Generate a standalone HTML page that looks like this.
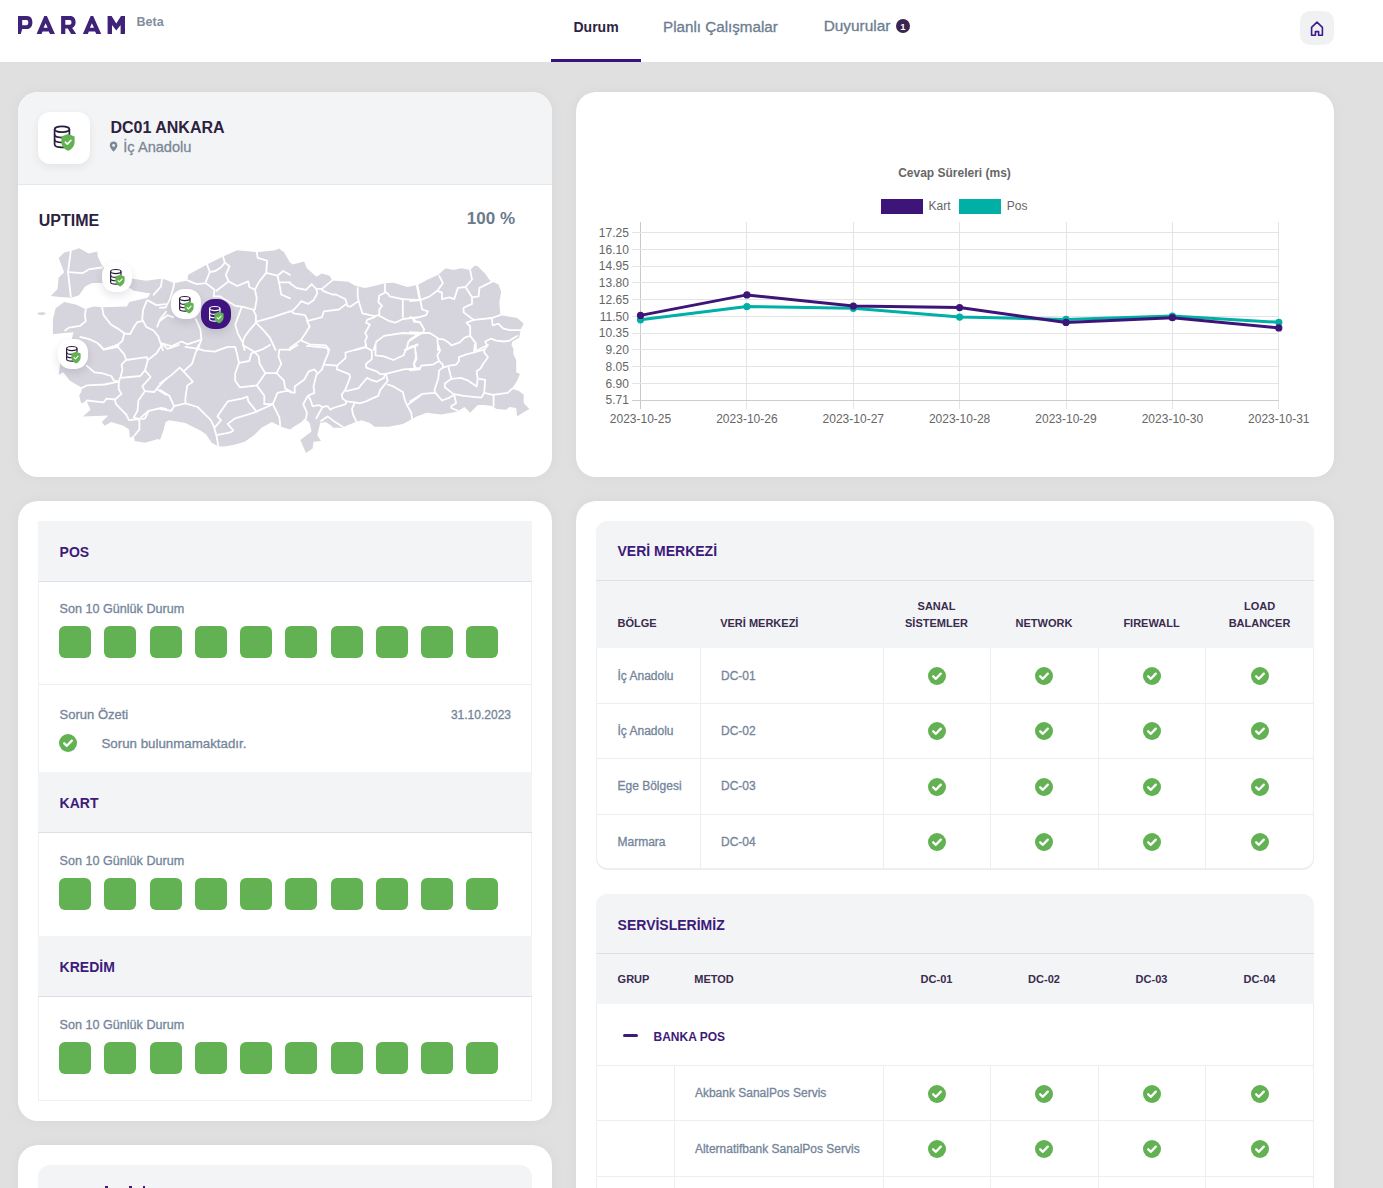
<!DOCTYPE html><html><head><meta charset="utf-8"><style>
html,body{margin:0;padding:0;}
body{width:1383px;height:1188px;overflow:hidden;position:relative;background:#e0e0e0;font-family:"Liberation Sans",sans-serif;}
.t{position:absolute;line-height:1;white-space:nowrap;}
.m{-webkit-text-stroke:0.3px currentColor;}
.r{position:absolute;}
.card{position:absolute;background:#fff;border-radius:20px;box-shadow:0 0 14px rgba(0,0,0,0.045);overflow:hidden;}
</style></head><body>
<div class="r" style="left:0px;top:0px;width:1383px;height:62px;background:#fff;"></div>
<svg class="r" style="left:0;top:0" width="140" height="40" viewBox="0 0 140 40"><g fill="#3f2378" fill-rule="evenodd">
<path d="M18 16 H27 C30.8 16 32.4 18.8 32.4 22.4 C32.4 26.2 30.3 29 26.8 29 H22.2 L20.8 34 H18 Z M22.2 19.9 H26.6 C27.8 19.9 28.3 21 28.3 22.5 C28.3 24.1 27.7 25.2 26.6 25.2 H22.2 Z"/>
<path d="M36.6 34 L44.3 16 H46.9 L54.9 34 H50 L48.8 31.4 H42.6 L41.5 34 Z M43.6 27.8 H47.7 L45.6 23.2 Z"/>
<path d="M61.1 16 H70 C73.8 16 75.6 18.7 75.6 22.2 C75.6 24.9 74.4 27 72.2 28 L76.2 34 H71.2 L67.8 28.6 H65.3 V34 H61.1 Z M65.3 19.9 H69.7 C70.9 19.9 71.5 20.9 71.5 22.3 C71.5 23.8 70.9 24.8 69.7 24.8 H65.3 Z"/>
<path d="M82.9 34 L90.6 16 H93.2 L101.2 34 H96.3 L95.1 31.4 H88.9 L87.8 34 Z M89.9 27.8 H94 L91.9 23.2 Z"/>
<path d="M107.6 34 V16 H111.6 L116.3 23.6 L121 16 H125 V34 H120.6 V25 L116.3 30.4 L112 25 V34 Z"/>
</g></svg>
<div class="t " style="left:136.6px;top:16.0px;font-size:12.5px;font-weight:700;color:#7f8d9d;">Beta</div>
<div class="t " style="left:573.5px;top:19.6px;font-size:14px;font-weight:700;color:#2e2342;">Durum</div>
<div class="t m" style="left:663.0px;top:18.6px;font-size:15.2px;font-weight:400;color:#6b7d90;">Planlı Çalışmalar</div>
<div class="t m" style="left:823.7px;top:18.4px;font-size:15.4px;font-weight:400;color:#6b7d90;">Duyurular</div>
<div class="r" style="left:896px;top:19px;width:14px;height:14px;border-radius:7px;background:#3a2450;"></div>
<div class="t " style="left:603.0px;width:600px;text-align:center;top:22.0px;font-size:9.5px;font-weight:700;color:#fff;">1</div>
<div class="r" style="left:551px;top:59px;width:90px;height:3px;background:#3b127a;"></div>
<div class="r" style="left:1300px;top:11px;width:34px;height:34px;border-radius:10px;background:#f0f1f3;"></div>
<svg class="r" style="left:1300px;top:11px" width="34" height="34" viewBox="0 0 34 34"><path d="M11.6 24.2 V16.4 L17 11.2 L22.4 16.4 V24.2 H18.6 V20.6 H15.4 V24.2 Z" fill="none" stroke="#3f1a8a" stroke-width="1.6" stroke-linejoin="round"/></svg>
<div class="card" style="left:18px;top:92px;width:534px;height:385px;">
<div class="r" style="left:0;top:0;width:534px;height:92px;background:#f3f4f6;border-bottom:1px solid #e4e6eb;"></div>
</div>
<div class="r" style="left:38px;top:112px;width:52px;height:52px;border-radius:12px;background:#fff;box-shadow:0 3px 8px rgba(0,0,0,0.07);"></div>
<svg class="r" style="left:48px;top:120px" width="32.0" height="36.0" viewBox="0 0 32 36"><g fill="none" stroke="#2a1d3d" stroke-width="1.7"><ellipse cx="14" cy="9.3" rx="7.4" ry="2.9"/><path d="M6.6 9.3 V24.3 C6.6 26.5 10 27.4 14 27.4 C15.5 27.4 16.5 27.3 17.5 27.1"/><path d="M21.4 9.3 V15"/><path d="M6.6 14.6 C6.6 16.6 10 17.6 14 17.6 C15.5 17.6 16.6 17.5 17.6 17.3"/><path d="M6.6 19.6 C6.6 21.6 10 22.5 14 22.5 C14.6 22.5 15.3 22.5 15.8 22.4"/></g><path d="M20 14.1 L26.6 16.6 V22.2 C26.6 26 23.6 29.3 20.2 30.8 C16.6 29.3 13.4 26 13.4 22.2 V16.6 Z" fill="#62b152"/><path d="M17.3 22.2 L19.3 24.1 L23 20.3" fill="none" stroke="#fff" stroke-width="1.6" stroke-linecap="round" stroke-linejoin="round"/></svg>
<div class="t " style="left:110.5px;top:119.6px;font-size:16px;font-weight:700;color:#2d2140;">DC01 ANKARA</div>
<svg class="r" style="left:109px;top:141px" width="10" height="12" viewBox="0 0 10 12"><path d="M4.6 0.6 C2.3 0.6 0.8 2.3 0.8 4.4 C0.8 6.9 4.6 10.6 4.6 10.6 C4.6 10.6 8.4 6.9 8.4 4.4 C8.4 2.3 6.9 0.6 4.6 0.6 Z M4.6 3 A1.4 1.4 0 1 1 4.6 5.8 A1.4 1.4 0 1 1 4.6 3 Z" fill="#7b8898" fill-rule="evenodd"/></svg>
<div class="t m" style="left:123.3px;top:139.6px;font-size:14.6px;font-weight:400;color:#7b8898;">İç Anadolu</div>
<div class="t " style="left:38.8px;top:212.5px;font-size:16px;font-weight:700;color:#2d2140;">UPTIME</div>
<div class="t " style="right:868.0px;top:209.5px;font-size:17px;font-weight:700;color:#6b7a8c;">100 %</div>
<svg class="r" style="left:0;top:0" width="560" height="480" viewBox="0 0 560 480">
<polygon points="58.6,258.1 64.2,252.5 70.8,251.0 79.2,248.2 88.6,253.4 97.1,251.5 98.0,257.2 102.7,266.6 108.0,270.0 118.0,274.0 126.0,277.0 132.8,278.8 146.0,280.7 161.0,278.8 166.0,279.7 174.1,283.2 187.3,280.4 188.2,274.8 207.0,264.4 223.0,256.4 237.1,250.3 256.8,252.2 275.6,250.3 278.9,248.5 284.0,252.2 290.0,262.6 292.8,264.4 304.1,261.6 306.9,268.2 316.3,276.7 322.0,273.4 329.5,275.7 332.3,280.4 348.3,281.8 355.8,286.0 365.2,288.0 378.3,285.1 385.0,283.2 393.4,282.8 407.5,287.0 417.5,285.1 427.9,279.5 438.2,274.8 445.7,268.2 453.2,270.1 460.8,268.2 470.2,270.1 474.8,265.4 477.7,266.3 485.2,273.8 489.9,280.4 498.3,284.2 501.2,291.7 499.3,302.0 500.2,312.4 500.2,315.2 517.1,318.0 523.7,323.6 520.9,329.3 519.0,337.7 512.4,341.5 511.5,345.0 513.4,348.8 513.4,354.4 516.2,360.0 516.2,372.3 520.0,374.1 517.1,380.7 513.4,386.4 509.6,391.1 513.4,389.2 519.0,391.1 523.7,394.8 523.7,403.3 529.4,408.9 522.8,412.7 517.1,416.4 516.2,408.0 509.6,407.0 505.9,409.8 496.5,408.9 491.8,406.1 484.2,405.1 477.7,405.1 470.2,412.7 464.5,407.0 457.0,411.7 441.0,414.5 426.9,412.7 416.6,416.4 411.9,419.2 410.0,420.2 402.8,423.9 388.7,426.8 374.6,426.8 369.9,423.0 361.4,420.2 355.8,422.1 346.4,425.8 341.7,427.7 333.2,427.7 330.4,424.9 325.7,422.1 320.1,423.0 317.3,435.2 321.0,440.9 313.5,441.8 312.6,448.4 306.0,453.1 300.3,439.9 311.6,431.5 309.7,423.0 305.0,418.3 301.3,422.1 293.8,426.8 290.0,429.6 281.2,426.8 271.8,422.1 261.5,427.7 254.0,435.2 244.6,441.8 235.2,444.6 224.8,446.5 218.3,446.5 211.7,442.7 206.0,434.3 200.4,430.5 185.4,423.0 169.4,420.2 165.6,422.1 163.8,429.6 160.0,439.9 158.2,439.0 145.0,442.7 134.7,440.9 133.7,435.2 130.0,438.0 129.0,429.6 123.4,425.8 111.2,422.1 104.6,425.8 101.8,422.1 108.4,415.5 83.0,416.4 90.5,409.8 86.8,401.4 81.1,403.3 79.2,395.8 82.0,390.1 81.1,387.3 69.8,380.7 63.3,372.3 58.6,375.1 60.0,365.0 60.0,345.0 71.7,339.0 73.6,332.3 61.4,333.3 52.9,334.2 52.9,319.2 54.8,311.7 55.6,308.2 64.3,302.1 76.4,304.7 85.1,309.0 93.8,306.4 102.5,307.3 126.8,306.4 129.4,302.1 147.6,297.8 150.5,293.6 133.7,290.8 130.2,288.2 118.0,287.0 100.7,283.0 92.0,283.0 85.1,286.5 79.0,295.2 71.2,297.8 60.0,297.0 50.8,296.0 57.6,289.0 58.6,277.8 64.2,272.2" fill="#d6d4dc"/>
<ellipse cx="41.6" cy="313.6" rx="4" ry="1.4" fill="#d6d4dc"/>
<g fill="none" stroke="#fff" stroke-width="1.8" stroke-linejoin="round" stroke-linecap="round">
<polyline points="70.8,251.0 68.0,272.2 70.8,296.6"/>
<polyline points="68.0,272.2 83.0,273.1 88.6,269.4 101.8,267.5"/>
<polyline points="101.8,306.0 103.7,315.4 111.2,324.8 117.8,328.6 124.3,333.3 130.0,334.2 134.7,325.8 137.5,322.0 142.2,321.1"/>
<polyline points="85.8,308.8 84.9,315.4 85.8,321.1 80.2,325.8 68.9,327.6 65.1,330.5"/>
<polyline points="124.3,333.3 122.5,340.8 116.8,345.5 111.2,348.3"/>
<polyline points="80.2,337.0 88.6,338.9 97.1,342.7 103.7,349.3 113.0,346.4 118.7,345.5"/>
<polyline points="146.9,300.4 143.1,309.8 142.2,319.2 146.0,326.7 153.5,330.5 158.2,336.1 162.9,350.2"/>
<polyline points="147.8,300.4 156.3,305.1 166.0,304.2"/>
<polyline points="166.0,311.7 160.1,319.2 157.2,326.7"/>
<polyline points="153.5,294.8 161.0,286.3 161.9,279.7"/>
<polyline points="174.1,283.2 173.2,288.9 169.4,300.2 165.6,307.7 160.0,307.7"/>
<polyline points="187.3,280.4 196.7,284.2 206.0,283.2 214.5,289.8 213.6,296.4 220.2,296.4 235.2,305.8 241.8,306.7 253.0,309.5 255.9,315.2 255.9,321.8 272.8,317.1 290.0,311.4"/>
<polyline points="207.0,264.4 209.8,272.0 206.0,281.4"/>
<polyline points="223.0,256.4 224.8,262.6 221.1,267.3 215.5,271.0 209.8,272.0"/>
<polyline points="224.8,262.6 229.5,266.3 225.8,274.8 228.6,281.4 216.4,290.8"/>
<polyline points="228.6,281.4 237.1,286.0 248.3,281.4 249.3,287.0 254.9,289.8 256.8,298.3 254.9,309.5"/>
<polyline points="256.8,252.2 257.7,257.9 267.1,260.7 266.2,272.9 258.7,282.3 254.9,289.8"/>
<polyline points="266.2,272.9 277.5,275.7 283.1,271.0 290.0,274.8"/>
<polyline points="277.5,275.7 279.4,284.2 281.2,294.5 290.0,298.3"/>
<polyline points="279.4,282.3 290.0,282.3"/>
<polyline points="241.8,306.7 238.0,317.1 235.2,324.6 238.0,334.0 242.7,342.4 244.6,350.0"/>
<polyline points="255.9,322.7 250.2,329.3 244.6,336.8 242.7,342.4"/>
<polyline points="255.9,322.7 263.4,330.2 270.0,337.8 275.6,350.0"/>
<polyline points="195.7,319.0 200.4,329.3 201.4,339.6 197.6,350.0"/>
<polyline points="160.0,320.8 167.5,315.2 173.2,317.1"/>
<polyline points="161.9,343.4 171.3,346.2 181.6,341.5 187.3,344.3 201.4,339.6"/>
<polyline points="290.0,283.2 296.6,288.0 306.0,289.8 311.6,284.2 316.3,288.9 322.0,288.9 332.3,280.4"/>
<polyline points="316.3,288.9 317.3,293.6 313.5,300.2 307.9,303.9 301.3,301.1 297.5,305.8 291.9,311.4 290.0,311.4"/>
<polyline points="322.0,288.9 322.9,290.8 332.3,294.5 336.0,294.5 345.5,299.2 347.3,305.8 350.2,306.7 358.6,301.1 357.7,296.4 357.7,287.9"/>
<polyline points="346.4,303.9 338.9,309.5 323.8,311.4 322.0,317.1 307.9,320.8 305.0,315.2 293.8,313.3 291.9,311.4"/>
<polyline points="358.6,301.1 362.4,313.3 374.6,316.1 378.3,315.2 388.7,320.8 395.3,322.7 402.8,319.0 420.0,317.1"/>
<polyline points="385.0,283.2 385.0,292.6 379.3,295.5 378.3,302.0 382.1,305.8 379.3,309.5 379.3,315.2"/>
<polyline points="385.0,291.7 388.7,294.5 389.6,296.4 399.0,298.3 402.8,299.2 420.0,300.2"/>
<polyline points="402.8,299.2 402.8,317.1"/>
<polyline points="416.9,286.0 419.7,300.2"/>
<polyline points="413.1,319.0 414.0,321.8 420.0,321.8"/>
<polyline points="306.9,320.8 309.7,326.5 305.0,334.0 301.3,339.6 290.0,348.0"/>
<polyline points="301.3,340.6 309.7,344.3 325.7,345.3 329.5,350.0"/>
<polyline points="374.6,317.1 367.1,319.9 366.1,322.7 369.9,324.6 365.2,333.0 367.1,336.8 365.2,340.6 366.1,347.1 355.8,350.0"/>
<polyline points="373.6,350.0 376.5,341.5 384.0,335.9 402.8,333.0 420.0,334.0"/>
<polyline points="420.0,334.0 408.4,341.5 406.5,350.0"/>
<polyline points="416.9,345.3 404.7,350.0"/>
<polyline points="417.5,285.1 420.3,300.2 410.0,301.1"/>
<polyline points="420.3,300.2 429.7,296.4 437.3,290.8 442.9,283.2 439.1,275.7"/>
<polyline points="437.3,290.8 442.0,292.6 442.0,299.2 449.5,297.3 454.2,299.2 457.9,287.9 465.5,287.0 472.0,279.5 470.2,270.1"/>
<polyline points="465.5,287.0 472.0,297.3 472.0,303.9 463.6,307.7 463.6,312.4 471.1,318.0 473.9,319.9 491.8,318.0 500.2,315.2"/>
<polyline points="494.6,280.4 479.5,287.9 478.6,296.4 472.0,297.3"/>
<polyline points="420.3,300.2 422.2,309.5 427.9,311.4 426.0,315.2 419.4,317.1 413.8,318.0 410.0,317.1"/>
<polyline points="413.8,318.0 414.7,320.8 420.3,322.7 424.1,329.3 423.2,333.0 410.0,332.1"/>
<polyline points="423.2,333.0 429.7,333.0 437.3,337.7 438.2,350.0"/>
<polyline points="473.9,319.9 466.4,322.7 470.2,326.5 470.2,335.9 464.5,337.7 459.8,342.4 451.4,345.3 448.5,342.4 443.8,339.6 438.2,338.7"/>
<polyline points="470.2,335.9 475.8,343.4 475.8,350.0"/>
<polyline points="491.8,318.0 492.7,325.5 498.3,323.6 503.0,328.4 509.6,330.2 520.9,330.2"/>
<polyline points="517.1,335.9 509.6,340.6 504.0,341.5 496.5,340.6 490.8,338.7 485.2,341.5 487.1,345.3 477.7,350.0"/>
<polyline points="410.0,339.6 415.6,335.9 423.2,333.0"/>
<polyline points="410.0,348.0 417.5,344.3"/>
<polyline points="86.8,365.7 94.3,372.3 101.8,373.2 111.2,376.0 114.0,380.7 118.7,381.7"/>
<polyline points="118.7,381.7 104.6,384.5 86.8,385.4 81.1,388.2"/>
<polyline points="118.7,381.7 120.6,377.0 122.5,369.4 121.5,364.7 126.2,360.0 124.3,354.4 117.8,346.9 115.9,345.0"/>
<polyline points="117.8,346.9 103.7,349.7 99.9,345.0"/>
<polyline points="126.2,360.0 139.4,358.2 146.9,357.2 147.8,360.0 145.0,370.4 140.3,376.0 130.0,377.0 120.6,377.9"/>
<polyline points="147.8,360.0 156.3,353.5 162.0,345.0"/>
<polyline points="145.0,370.4 150.7,377.0 142.2,386.4 145.0,391.1 154.4,392.0 157.2,388.2 166.0,378.8"/>
<polyline points="157.2,389.2 166.0,394.8"/>
<polyline points="118.7,381.7 118.7,389.2 121.5,393.9 115.0,399.5 115.9,404.2 126.2,414.5 129.0,420.2 139.4,419.2"/>
<polyline points="145.0,391.1 138.4,400.5 137.5,410.8 133.7,417.4 139.4,419.2 142.2,416.4 148.8,410.8 161.0,408.0 166.0,409.0"/>
<polyline points="139.4,419.2 139.4,429.6 134.7,435.2"/>
<polyline points="148.8,410.8 145.0,418.3 142.2,419.2"/>
<polyline points="115.0,399.5 106.5,398.6 103.7,402.3 86.8,400.5 83.0,405.1"/>
<polyline points="160.0,383.5 171.3,375.1 179.7,367.6 183.5,371.3 192.0,363.8 195.7,352.5 198.5,345.0"/>
<polyline points="183.5,371.3 192.9,381.7 187.3,385.4 185.4,397.6 185.4,403.3 174.1,406.1 169.4,395.8 160.0,390.1"/>
<polyline points="174.1,406.1 171.3,410.8 160.0,408.9"/>
<polyline points="185.4,403.3 197.6,407.0 210.8,420.2 213.6,425.8 216.4,435.2 218.3,446.5"/>
<polyline points="214.5,427.7 221.1,420.2 217.3,416.4 227.7,401.4 241.8,398.6 247.4,396.7 248.3,401.4 256.8,411.7"/>
<polyline points="216.4,435.2 230.5,432.4 233.3,430.5 227.7,423.9 235.2,418.3 254.0,412.6 272.8,404.2"/>
<polyline points="272.8,404.2 277.5,392.9 285.0,391.1 290.0,391.1"/>
<polyline points="272.8,404.2 279.4,417.4 280.3,425.8"/>
<polyline points="161.9,343.4 167.5,348.8 178.8,345.0"/>
<polyline points="185.4,346.9 198.5,348.8 204.2,350.6 214.5,351.6 227.7,346.9 235.2,346.9 237.1,354.4 239.0,362.9 249.3,361.0 251.2,353.5 263.4,348.8 270.0,345.0"/>
<polyline points="239.0,362.9 235.2,373.2 235.2,380.7 239.9,387.3 256.8,385.4 265.3,373.2 276.5,373.2 281.2,363.8 278.4,356.3 279.4,349.7 290.0,349.7"/>
<polyline points="256.8,385.4 264.3,395.8 264.3,404.2 272.8,404.2"/>
<polyline points="265.3,373.2 259.6,363.8 258.7,356.3 254.0,351.6 242.7,345.0"/>
<polyline points="276.5,373.2 284.0,380.7 285.0,388.2 290.0,391.1"/>
<polyline points="290.0,349.7 297.5,345.0"/>
<polyline points="306.9,345.9 317.3,346.9 327.6,347.8 328.5,352.5 323.8,363.8 322.0,369.4 316.3,375.1 313.5,386.4 314.4,392.9 307.9,395.8 303.2,404.2 306.9,412.7 306.0,418.3"/>
<polyline points="290.0,392.0 294.7,392.9 294.7,386.4 304.1,379.8 308.8,371.3 314.4,369.4 317.3,373.2"/>
<polyline points="323.8,364.7 337.0,365.7 337.0,369.4 349.2,374.1 350.2,377.0 345.5,389.2 341.7,394.8 342.6,398.6 346.4,401.4 345.5,404.2 333.2,408.0 330.4,409.8 327.6,406.1 322.0,407.0 319.1,405.1 312.6,406.1 310.7,400.5 308.8,396.7"/>
<polyline points="337.0,365.7 345.5,358.2 345.5,352.5 355.8,349.7 365.2,346.9 366.1,345.0"/>
<polyline points="365.2,346.9 371.8,350.6 371.8,359.1 366.1,363.8 366.1,367.6 376.5,371.3 380.2,374.1 384.9,374.1 384.0,377.9 376.5,381.7 370.8,379.8 367.1,377.9 361.4,384.5 358.6,388.2 346.4,391.1"/>
<polyline points="375.5,345.0 375.5,355.3 384.0,356.3 393.4,360.0 403.7,355.3 405.6,349.7 415.0,345.9"/>
<polyline points="415.0,345.9 415.9,357.2 414.0,363.8 415.9,368.5 420.0,368.5"/>
<polyline points="384.9,374.1 403.7,369.4 420.0,368.5"/>
<polyline points="385.9,374.1 387.7,380.7 380.2,390.1 378.3,395.8 371.8,398.6 366.1,401.4 359.5,403.3 354.8,402.3 352.0,408.9 353.0,414.5 356.7,422.1"/>
<polyline points="387.7,384.5 393.4,386.4 402.8,392.0 404.7,399.5 407.5,406.1 411.2,412.7 412.2,420.2"/>
<polyline points="407.5,405.1 420.0,395.8"/>
<polyline points="346.4,401.4 354.8,402.3"/>
<polyline points="316.3,418.3 322.0,408.0"/>
<polyline points="321.0,421.1 327.6,416.4 335.1,422.1 342.6,426.8"/>
<polyline points="410.0,346.9 417.5,345.0"/>
<polyline points="415.6,352.5 416.6,359.1 413.8,363.8 414.7,368.5 410.0,369.4"/>
<polyline points="438.2,345.0 440.1,350.6 437.3,355.3 439.1,361.0 432.6,364.7 421.3,365.7 419.4,369.4 410.0,370.4"/>
<polyline points="439.1,361.0 442.9,364.7 442.9,367.6 439.1,370.4 438.2,378.8 434.4,390.1 435.4,392.9 422.2,393.9 410.0,401.4"/>
<polyline points="435.4,392.9 442.0,400.5 449.5,397.6 454.2,394.8 456.1,403.3 451.4,406.1 451.4,408.0 457.9,410.8"/>
<polyline points="442.9,367.6 449.5,365.7 456.1,364.7 458.9,361.0 458.9,357.2 466.4,354.4 473.9,352.5 474.8,345.0"/>
<polyline points="473.9,352.5 484.2,349.7 488.0,345.0"/>
<polyline points="484.2,349.7 484.2,352.5 488.0,357.2 483.3,363.8 480.5,368.5 476.7,371.3 477.7,378.8 476.7,386.4 468.3,380.7 460.8,377.9 451.4,378.8 448.5,367.6"/>
<polyline points="451.4,378.8 444.8,383.5 444.8,387.3 453.2,393.9 463.6,395.8 481.4,397.6 484.2,392.9 485.2,379.8 479.5,378.8"/>
<polyline points="484.2,392.9 492.7,394.8 507.7,392.9 511.5,389.2"/>
<polyline points="493.6,394.8 493.6,406.1"/>
<polyline points="475.8,350.0 474.8,345.0"/>
<polyline points="438.2,350.0 438.2,345.0"/>
<polyline points="406.5,350.0 405.6,349.7"/>
<polyline points="366.1,347.1 366.1,345.0"/>
</g></svg>
<div class="r" style="left:102px;top:262px;width:30px;height:30px;border-radius:13px;background:#fff;box-shadow:0 4px 8px rgba(40,30,80,0.12);"></div>
<svg class="r" style="left:106px;top:264.5px" width="22.4" height="25.2" viewBox="0 0 32 36"><g fill="none" stroke="#2a1d3d" stroke-width="1.7"><ellipse cx="14" cy="9.3" rx="7.4" ry="2.9"/><path d="M6.6 9.3 V24.3 C6.6 26.5 10 27.4 14 27.4 C15.5 27.4 16.5 27.3 17.5 27.1"/><path d="M21.4 9.3 V15"/><path d="M6.6 14.6 C6.6 16.6 10 17.6 14 17.6 C15.5 17.6 16.6 17.5 17.6 17.3"/><path d="M6.6 19.6 C6.6 21.6 10 22.5 14 22.5 C14.6 22.5 15.3 22.5 15.8 22.4"/></g><path d="M20 14.1 L26.6 16.6 V22.2 C26.6 26 23.6 29.3 20.2 30.8 C16.6 29.3 13.4 26 13.4 22.2 V16.6 Z" fill="#62b152"/><path d="M17.3 22.2 L19.3 24.1 L23 20.3" fill="none" stroke="#fff" stroke-width="1.6" stroke-linecap="round" stroke-linejoin="round"/></svg>
<div class="r" style="left:58px;top:339px;width:30px;height:30px;border-radius:13px;background:#fff;box-shadow:0 4px 8px rgba(40,30,80,0.12);"></div>
<svg class="r" style="left:62px;top:341.5px" width="22.4" height="25.2" viewBox="0 0 32 36"><g fill="none" stroke="#2a1d3d" stroke-width="1.7"><ellipse cx="14" cy="9.3" rx="7.4" ry="2.9"/><path d="M6.6 9.3 V24.3 C6.6 26.5 10 27.4 14 27.4 C15.5 27.4 16.5 27.3 17.5 27.1"/><path d="M21.4 9.3 V15"/><path d="M6.6 14.6 C6.6 16.6 10 17.6 14 17.6 C15.5 17.6 16.6 17.5 17.6 17.3"/><path d="M6.6 19.6 C6.6 21.6 10 22.5 14 22.5 C14.6 22.5 15.3 22.5 15.8 22.4"/></g><path d="M20 14.1 L26.6 16.6 V22.2 C26.6 26 23.6 29.3 20.2 30.8 C16.6 29.3 13.4 26 13.4 22.2 V16.6 Z" fill="#62b152"/><path d="M17.3 22.2 L19.3 24.1 L23 20.3" fill="none" stroke="#fff" stroke-width="1.6" stroke-linecap="round" stroke-linejoin="round"/></svg>
<div class="r" style="left:171px;top:289px;width:30px;height:30px;border-radius:13px;background:#fff;box-shadow:0 4px 8px rgba(40,30,80,0.12);"></div>
<svg class="r" style="left:175px;top:291.5px" width="22.4" height="25.2" viewBox="0 0 32 36"><g fill="none" stroke="#2a1d3d" stroke-width="1.7"><ellipse cx="14" cy="9.3" rx="7.4" ry="2.9"/><path d="M6.6 9.3 V24.3 C6.6 26.5 10 27.4 14 27.4 C15.5 27.4 16.5 27.3 17.5 27.1"/><path d="M21.4 9.3 V15"/><path d="M6.6 14.6 C6.6 16.6 10 17.6 14 17.6 C15.5 17.6 16.6 17.5 17.6 17.3"/><path d="M6.6 19.6 C6.6 21.6 10 22.5 14 22.5 C14.6 22.5 15.3 22.5 15.8 22.4"/></g><path d="M20 14.1 L26.6 16.6 V22.2 C26.6 26 23.6 29.3 20.2 30.8 C16.6 29.3 13.4 26 13.4 22.2 V16.6 Z" fill="#62b152"/><path d="M17.3 22.2 L19.3 24.1 L23 20.3" fill="none" stroke="#fff" stroke-width="1.6" stroke-linecap="round" stroke-linejoin="round"/></svg>
<div class="r" style="left:201px;top:299px;width:30px;height:30px;border-radius:13px;background:#3f1480;box-shadow:0 4px 8px rgba(40,30,80,0.12);"></div>
<svg class="r" style="left:205px;top:301.5px" width="22.4" height="25.2" viewBox="0 0 32 36"><g fill="none" stroke="#fff" stroke-width="1.7"><ellipse cx="14" cy="9.3" rx="7.4" ry="2.9"/><path d="M6.6 9.3 V24.3 C6.6 26.5 10 27.4 14 27.4 C15.5 27.4 16.5 27.3 17.5 27.1"/><path d="M21.4 9.3 V15"/><path d="M6.6 14.6 C6.6 16.6 10 17.6 14 17.6 C15.5 17.6 16.6 17.5 17.6 17.3"/><path d="M6.6 19.6 C6.6 21.6 10 22.5 14 22.5 C14.6 22.5 15.3 22.5 15.8 22.4"/></g><path d="M20 14.1 L26.6 16.6 V22.2 C26.6 26 23.6 29.3 20.2 30.8 C16.6 29.3 13.4 26 13.4 22.2 V16.6 Z" fill="#62b152"/><path d="M17.3 22.2 L19.3 24.1 L23 20.3" fill="none" stroke="#fff" stroke-width="1.6" stroke-linecap="round" stroke-linejoin="round"/></svg>
<div class="card" style="left:576px;top:92px;width:758px;height:385px;"></div>
<svg class="r" style="left:576px;top:92px" width="758" height="385" viewBox="576 92 758 385">
<g shape-rendering="crispEdges">
<line x1="640.5" y1="222" x2="640.5" y2="408.5" stroke="#c9c9c9" stroke-width="1"/>
<line x1="746.9" y1="222" x2="746.9" y2="408.5" stroke="#e4e4e4" stroke-width="1"/>
<line x1="853.3" y1="222" x2="853.3" y2="408.5" stroke="#e4e4e4" stroke-width="1"/>
<line x1="959.6" y1="222" x2="959.6" y2="408.5" stroke="#e4e4e4" stroke-width="1"/>
<line x1="1066.0" y1="222" x2="1066.0" y2="408.5" stroke="#e4e4e4" stroke-width="1"/>
<line x1="1172.4" y1="222" x2="1172.4" y2="408.5" stroke="#e4e4e4" stroke-width="1"/>
<line x1="1278.8" y1="222" x2="1278.8" y2="408.5" stroke="#e4e4e4" stroke-width="1"/>
<line x1="632.2" y1="232.6" x2="1279" y2="232.6" stroke="#e4e4e4" stroke-width="1"/>
<line x1="632.2" y1="249.4" x2="1279" y2="249.4" stroke="#e4e4e4" stroke-width="1"/>
<line x1="632.2" y1="266.1" x2="1279" y2="266.1" stroke="#e4e4e4" stroke-width="1"/>
<line x1="632.2" y1="282.9" x2="1279" y2="282.9" stroke="#e4e4e4" stroke-width="1"/>
<line x1="632.2" y1="299.6" x2="1279" y2="299.6" stroke="#e4e4e4" stroke-width="1"/>
<line x1="632.2" y1="316.4" x2="1279" y2="316.4" stroke="#e4e4e4" stroke-width="1"/>
<line x1="632.2" y1="333.2" x2="1279" y2="333.2" stroke="#e4e4e4" stroke-width="1"/>
<line x1="632.2" y1="349.9" x2="1279" y2="349.9" stroke="#e4e4e4" stroke-width="1"/>
<line x1="632.2" y1="366.7" x2="1279" y2="366.7" stroke="#e4e4e4" stroke-width="1"/>
<line x1="632.2" y1="383.4" x2="1279" y2="383.4" stroke="#e4e4e4" stroke-width="1"/>
<line x1="632.2" y1="400.2" x2="1279" y2="400.2" stroke="#cdcdcd" stroke-width="1"/>
</g>
<polyline points="640.5,319.8 746.9,306.6 853.3,308.3 959.6,317.1 1066.0,319.4 1172.4,316.0 1278.8,322.3" fill="none" stroke="#00afa6" stroke-width="3" stroke-linejoin="round"/>
<circle cx="640.5" cy="319.8" r="3.6" fill="#00afa6"/>
<circle cx="746.9" cy="306.6" r="3.6" fill="#00afa6"/>
<circle cx="853.3" cy="308.3" r="3.6" fill="#00afa6"/>
<circle cx="959.6" cy="317.1" r="3.6" fill="#00afa6"/>
<circle cx="1066.0" cy="319.4" r="3.6" fill="#00afa6"/>
<circle cx="1172.4" cy="316.0" r="3.6" fill="#00afa6"/>
<circle cx="1278.8" cy="322.3" r="3.6" fill="#00afa6"/>
<polyline points="640.5,315.4 746.9,294.9 853.3,306.1 959.6,307.6 1066.0,322.4 1172.4,317.7 1278.8,327.9" fill="none" stroke="#3d1478" stroke-width="3" stroke-linejoin="round"/>
<circle cx="640.5" cy="315.4" r="3.6" fill="#3d1478"/>
<circle cx="746.9" cy="294.9" r="3.6" fill="#3d1478"/>
<circle cx="853.3" cy="306.1" r="3.6" fill="#3d1478"/>
<circle cx="959.6" cy="307.6" r="3.6" fill="#3d1478"/>
<circle cx="1066.0" cy="322.4" r="3.6" fill="#3d1478"/>
<circle cx="1172.4" cy="317.7" r="3.6" fill="#3d1478"/>
<circle cx="1278.8" cy="327.9" r="3.6" fill="#3d1478"/>
</svg>
<div class="t " style="right:754.2px;top:226.8px;font-size:12px;font-weight:400;color:#666;">17.25</div>
<div class="t " style="right:754.2px;top:243.5px;font-size:12px;font-weight:400;color:#666;">16.10</div>
<div class="t " style="right:754.2px;top:260.3px;font-size:12px;font-weight:400;color:#666;">14.95</div>
<div class="t " style="right:754.2px;top:277.0px;font-size:12px;font-weight:400;color:#666;">13.80</div>
<div class="t " style="right:754.2px;top:293.8px;font-size:12px;font-weight:400;color:#666;">12.65</div>
<div class="t " style="right:754.2px;top:310.6px;font-size:12px;font-weight:400;color:#666;">11.50</div>
<div class="t " style="right:754.2px;top:327.3px;font-size:12px;font-weight:400;color:#666;">10.35</div>
<div class="t " style="right:754.2px;top:344.1px;font-size:12px;font-weight:400;color:#666;">9.20</div>
<div class="t " style="right:754.2px;top:360.8px;font-size:12px;font-weight:400;color:#666;">8.05</div>
<div class="t " style="right:754.2px;top:377.6px;font-size:12px;font-weight:400;color:#666;">6.90</div>
<div class="t " style="right:754.2px;top:394.4px;font-size:12px;font-weight:400;color:#666;">5.71</div>
<div class="t " style="left:340.5px;width:600px;text-align:center;top:412.6px;font-size:12px;font-weight:400;color:#666;">2023-10-25</div>
<div class="t " style="left:446.9px;width:600px;text-align:center;top:412.6px;font-size:12px;font-weight:400;color:#666;">2023-10-26</div>
<div class="t " style="left:553.3px;width:600px;text-align:center;top:412.6px;font-size:12px;font-weight:400;color:#666;">2023-10-27</div>
<div class="t " style="left:659.6px;width:600px;text-align:center;top:412.6px;font-size:12px;font-weight:400;color:#666;">2023-10-28</div>
<div class="t " style="left:766.0px;width:600px;text-align:center;top:412.6px;font-size:12px;font-weight:400;color:#666;">2023-10-29</div>
<div class="t " style="left:872.4px;width:600px;text-align:center;top:412.6px;font-size:12px;font-weight:400;color:#666;">2023-10-30</div>
<div class="t " style="left:978.8px;width:600px;text-align:center;top:412.6px;font-size:12px;font-weight:400;color:#666;">2023-10-31</div>
<div class="t " style="left:654.5px;width:600px;text-align:center;top:167.0px;font-size:12px;font-weight:700;color:#666;">Cevap Süreleri (ms)</div>
<div class="r" style="left:881px;top:199px;width:42px;height:15px;background:#3d1478;"></div>
<div class="t " style="left:928.6px;top:199.6px;font-size:12px;font-weight:400;color:#666;">Kart</div>
<div class="r" style="left:959px;top:199px;width:42px;height:15px;background:#00afa6;"></div>
<div class="t " style="left:1006.8px;top:199.6px;font-size:12px;font-weight:400;color:#666;">Pos</div>
<div class="card" style="left:18px;top:501px;width:534px;height:620px;"></div>
<div class="r" style="left:38px;top:521px;width:492px;height:579px;border:1px solid #eef0f3;border-top:none;"></div>
<div class="r" style="left:38px;top:521px;width:494px;height:59.5px;background:#f3f4f6;border-bottom:1px solid #dde0e7;"></div>
<div class="t " style="left:59.6px;top:544.5px;font-size:14px;font-weight:700;color:#3e1a7a;">POS</div>
<div class="t m" style="left:59.6px;top:603.2px;font-size:12.6px;font-weight:400;color:#74859a;">Son 10 Günlük Durum</div>
<div class="r" style="left:59.0px;top:626px;width:32px;height:32px;border-radius:6px;background:#62b152;"></div>
<div class="r" style="left:104.2px;top:626px;width:32px;height:32px;border-radius:6px;background:#62b152;"></div>
<div class="r" style="left:149.5px;top:626px;width:32px;height:32px;border-radius:6px;background:#62b152;"></div>
<div class="r" style="left:194.8px;top:626px;width:32px;height:32px;border-radius:6px;background:#62b152;"></div>
<div class="r" style="left:240.0px;top:626px;width:32px;height:32px;border-radius:6px;background:#62b152;"></div>
<div class="r" style="left:285.2px;top:626px;width:32px;height:32px;border-radius:6px;background:#62b152;"></div>
<div class="r" style="left:330.5px;top:626px;width:32px;height:32px;border-radius:6px;background:#62b152;"></div>
<div class="r" style="left:375.8px;top:626px;width:32px;height:32px;border-radius:6px;background:#62b152;"></div>
<div class="r" style="left:421.0px;top:626px;width:32px;height:32px;border-radius:6px;background:#62b152;"></div>
<div class="r" style="left:466.2px;top:626px;width:32px;height:32px;border-radius:6px;background:#62b152;"></div>
<div class="r" style="left:38px;top:684px;width:494px;height:1px;background:#eceef2;"></div>
<div class="t m" style="left:59.6px;top:707.6px;font-size:13px;font-weight:400;color:#74859a;">Sorun Özeti</div>
<div class="t m" style="right:872.0px;top:708.5px;font-size:12px;font-weight:400;color:#74859a;">31.10.2023</div>
<svg class="r" style="left:59px;top:734px" width="18" height="18" viewBox="0 0 18 18"><circle cx="9" cy="9" r="9" fill="#62b152"/><path d="M5.2 9.3 L7.9 11.8 L12.8 6.6" fill="none" stroke="#fff" stroke-width="2.3" stroke-linecap="round" stroke-linejoin="round"/></svg>
<div class="t m" style="left:101.5px;top:737.2px;font-size:13.3px;font-weight:400;color:#74859a;">Sorun bulunmamaktadır.</div>
<div class="r" style="left:38px;top:772px;width:494px;height:60px;background:#f3f4f6;border-bottom:1px solid #dde0e7;"></div>
<div class="t " style="left:59.6px;top:795.5px;font-size:14px;font-weight:700;color:#3e1a7a;">KART</div>
<div class="t m" style="left:59.6px;top:855.2px;font-size:12.6px;font-weight:400;color:#74859a;">Son 10 Günlük Durum</div>
<div class="r" style="left:59.0px;top:878px;width:32px;height:32px;border-radius:6px;background:#62b152;"></div>
<div class="r" style="left:104.2px;top:878px;width:32px;height:32px;border-radius:6px;background:#62b152;"></div>
<div class="r" style="left:149.5px;top:878px;width:32px;height:32px;border-radius:6px;background:#62b152;"></div>
<div class="r" style="left:194.8px;top:878px;width:32px;height:32px;border-radius:6px;background:#62b152;"></div>
<div class="r" style="left:240.0px;top:878px;width:32px;height:32px;border-radius:6px;background:#62b152;"></div>
<div class="r" style="left:285.2px;top:878px;width:32px;height:32px;border-radius:6px;background:#62b152;"></div>
<div class="r" style="left:330.5px;top:878px;width:32px;height:32px;border-radius:6px;background:#62b152;"></div>
<div class="r" style="left:375.8px;top:878px;width:32px;height:32px;border-radius:6px;background:#62b152;"></div>
<div class="r" style="left:421.0px;top:878px;width:32px;height:32px;border-radius:6px;background:#62b152;"></div>
<div class="r" style="left:466.2px;top:878px;width:32px;height:32px;border-radius:6px;background:#62b152;"></div>
<div class="r" style="left:38px;top:936px;width:494px;height:60px;background:#f3f4f6;border-bottom:1px solid #dde0e7;"></div>
<div class="t " style="left:59.6px;top:959.5px;font-size:14px;font-weight:700;color:#3e1a7a;">KREDİM</div>
<div class="t m" style="left:59.6px;top:1019.2px;font-size:12.6px;font-weight:400;color:#74859a;">Son 10 Günlük Durum</div>
<div class="r" style="left:59.0px;top:1042px;width:32px;height:32px;border-radius:6px;background:#62b152;"></div>
<div class="r" style="left:104.2px;top:1042px;width:32px;height:32px;border-radius:6px;background:#62b152;"></div>
<div class="r" style="left:149.5px;top:1042px;width:32px;height:32px;border-radius:6px;background:#62b152;"></div>
<div class="r" style="left:194.8px;top:1042px;width:32px;height:32px;border-radius:6px;background:#62b152;"></div>
<div class="r" style="left:240.0px;top:1042px;width:32px;height:32px;border-radius:6px;background:#62b152;"></div>
<div class="r" style="left:285.2px;top:1042px;width:32px;height:32px;border-radius:6px;background:#62b152;"></div>
<div class="r" style="left:330.5px;top:1042px;width:32px;height:32px;border-radius:6px;background:#62b152;"></div>
<div class="r" style="left:375.8px;top:1042px;width:32px;height:32px;border-radius:6px;background:#62b152;"></div>
<div class="r" style="left:421.0px;top:1042px;width:32px;height:32px;border-radius:6px;background:#62b152;"></div>
<div class="r" style="left:466.2px;top:1042px;width:32px;height:32px;border-radius:6px;background:#62b152;"></div>
<div class="card" style="left:18px;top:1145px;width:534px;height:200px;"></div>
<div class="r" style="left:38px;top:1165px;width:494px;height:60px;border-radius:12px 12px 0 0;background:#f3f4f6;"></div>
<div class="r" style="left:105px;top:1186px;width:2.5px;height:2px;background:#3e1a7a;"></div>
<div class="r" style="left:129px;top:1186px;width:2.5px;height:2px;background:#3e1a7a;"></div>
<div class="r" style="left:142.5px;top:1186px;width:2.5px;height:2px;background:#3e1a7a;"></div>
<div class="card" style="left:576px;top:501px;width:758px;height:800px;"></div>
<div class="r" style="left:596px;top:521px;width:718px;height:349px;border-radius:12px;overflow:hidden;box-shadow:inset 0 0 0 1px #eceef2, inset 0 -2px 0 0 #eceef2;"></div>
<div class="r" style="left:596px;top:521px;width:718px;height:59px;border-radius:12px 12px 0 0;background:#f3f4f6;border-bottom:1px solid #dde0e7;"></div>
<div class="t " style="left:617.5px;top:544.4px;font-size:14px;font-weight:700;color:#3e1a7a;">VERİ MERKEZİ</div>
<div class="r" style="left:596px;top:581px;width:718px;height:67px;background:#f3f4f6;"></div>
<div class="t " style="left:617.5px;top:618.1px;font-size:11px;font-weight:700;color:#3a2b4f;">BÖLGE</div>
<div class="t " style="left:720.2px;top:618.1px;font-size:11px;font-weight:700;color:#3a2b4f;">VERİ MERKEZİ</div>
<div class="t " style="left:636.5px;width:600px;text-align:center;top:601.0px;font-size:11px;font-weight:700;color:#3a2b4f;">SANAL</div>
<div class="t " style="left:636.5px;width:600px;text-align:center;top:618.2px;font-size:11px;font-weight:700;color:#3a2b4f;">SİSTEMLER</div>
<div class="t " style="left:744.0px;width:600px;text-align:center;top:618.2px;font-size:11px;font-weight:700;color:#3a2b4f;">NETWORK</div>
<div class="t " style="left:851.5px;width:600px;text-align:center;top:618.2px;font-size:11px;font-weight:700;color:#3a2b4f;">FIREWALL</div>
<div class="t " style="left:959.5px;width:600px;text-align:center;top:601.0px;font-size:11px;font-weight:700;color:#3a2b4f;">LOAD</div>
<div class="t " style="left:959.5px;width:600px;text-align:center;top:618.2px;font-size:11px;font-weight:700;color:#3a2b4f;">BALANCER</div>
<div class="t m" style="left:617.5px;top:669.5px;font-size:12px;font-weight:400;color:#74859a;">İç Anadolu</div>
<div class="t m" style="left:721.0px;top:669.5px;font-size:12px;font-weight:400;color:#74859a;">DC-01</div>
<svg class="r" style="left:927.5px;top:667px" width="18" height="18" viewBox="0 0 18 18"><circle cx="9" cy="9" r="9" fill="#62b152"/><path d="M5.2 9.3 L7.9 11.8 L12.8 6.6" fill="none" stroke="#fff" stroke-width="2.3" stroke-linecap="round" stroke-linejoin="round"/></svg>
<svg class="r" style="left:1035.0px;top:667px" width="18" height="18" viewBox="0 0 18 18"><circle cx="9" cy="9" r="9" fill="#62b152"/><path d="M5.2 9.3 L7.9 11.8 L12.8 6.6" fill="none" stroke="#fff" stroke-width="2.3" stroke-linecap="round" stroke-linejoin="round"/></svg>
<svg class="r" style="left:1142.5px;top:667px" width="18" height="18" viewBox="0 0 18 18"><circle cx="9" cy="9" r="9" fill="#62b152"/><path d="M5.2 9.3 L7.9 11.8 L12.8 6.6" fill="none" stroke="#fff" stroke-width="2.3" stroke-linecap="round" stroke-linejoin="round"/></svg>
<svg class="r" style="left:1250.5px;top:667px" width="18" height="18" viewBox="0 0 18 18"><circle cx="9" cy="9" r="9" fill="#62b152"/><path d="M5.2 9.3 L7.9 11.8 L12.8 6.6" fill="none" stroke="#fff" stroke-width="2.3" stroke-linecap="round" stroke-linejoin="round"/></svg>
<div class="r" style="left:596px;top:703px;width:718px;height:1px;background:#eceef2;"></div>
<div class="t m" style="left:617.5px;top:724.5px;font-size:12px;font-weight:400;color:#74859a;">İç Anadolu</div>
<div class="t m" style="left:721.0px;top:724.5px;font-size:12px;font-weight:400;color:#74859a;">DC-02</div>
<svg class="r" style="left:927.5px;top:722px" width="18" height="18" viewBox="0 0 18 18"><circle cx="9" cy="9" r="9" fill="#62b152"/><path d="M5.2 9.3 L7.9 11.8 L12.8 6.6" fill="none" stroke="#fff" stroke-width="2.3" stroke-linecap="round" stroke-linejoin="round"/></svg>
<svg class="r" style="left:1035.0px;top:722px" width="18" height="18" viewBox="0 0 18 18"><circle cx="9" cy="9" r="9" fill="#62b152"/><path d="M5.2 9.3 L7.9 11.8 L12.8 6.6" fill="none" stroke="#fff" stroke-width="2.3" stroke-linecap="round" stroke-linejoin="round"/></svg>
<svg class="r" style="left:1142.5px;top:722px" width="18" height="18" viewBox="0 0 18 18"><circle cx="9" cy="9" r="9" fill="#62b152"/><path d="M5.2 9.3 L7.9 11.8 L12.8 6.6" fill="none" stroke="#fff" stroke-width="2.3" stroke-linecap="round" stroke-linejoin="round"/></svg>
<svg class="r" style="left:1250.5px;top:722px" width="18" height="18" viewBox="0 0 18 18"><circle cx="9" cy="9" r="9" fill="#62b152"/><path d="M5.2 9.3 L7.9 11.8 L12.8 6.6" fill="none" stroke="#fff" stroke-width="2.3" stroke-linecap="round" stroke-linejoin="round"/></svg>
<div class="r" style="left:596px;top:758px;width:718px;height:1px;background:#eceef2;"></div>
<div class="t m" style="left:617.5px;top:780.0px;font-size:12px;font-weight:400;color:#74859a;">Ege Bölgesi</div>
<div class="t m" style="left:721.0px;top:780.0px;font-size:12px;font-weight:400;color:#74859a;">DC-03</div>
<svg class="r" style="left:927.5px;top:777.5px" width="18" height="18" viewBox="0 0 18 18"><circle cx="9" cy="9" r="9" fill="#62b152"/><path d="M5.2 9.3 L7.9 11.8 L12.8 6.6" fill="none" stroke="#fff" stroke-width="2.3" stroke-linecap="round" stroke-linejoin="round"/></svg>
<svg class="r" style="left:1035.0px;top:777.5px" width="18" height="18" viewBox="0 0 18 18"><circle cx="9" cy="9" r="9" fill="#62b152"/><path d="M5.2 9.3 L7.9 11.8 L12.8 6.6" fill="none" stroke="#fff" stroke-width="2.3" stroke-linecap="round" stroke-linejoin="round"/></svg>
<svg class="r" style="left:1142.5px;top:777.5px" width="18" height="18" viewBox="0 0 18 18"><circle cx="9" cy="9" r="9" fill="#62b152"/><path d="M5.2 9.3 L7.9 11.8 L12.8 6.6" fill="none" stroke="#fff" stroke-width="2.3" stroke-linecap="round" stroke-linejoin="round"/></svg>
<svg class="r" style="left:1250.5px;top:777.5px" width="18" height="18" viewBox="0 0 18 18"><circle cx="9" cy="9" r="9" fill="#62b152"/><path d="M5.2 9.3 L7.9 11.8 L12.8 6.6" fill="none" stroke="#fff" stroke-width="2.3" stroke-linecap="round" stroke-linejoin="round"/></svg>
<div class="r" style="left:596px;top:814px;width:718px;height:1px;background:#eceef2;"></div>
<div class="t m" style="left:617.5px;top:835.5px;font-size:12px;font-weight:400;color:#74859a;">Marmara</div>
<div class="t m" style="left:721.0px;top:835.5px;font-size:12px;font-weight:400;color:#74859a;">DC-04</div>
<svg class="r" style="left:927.5px;top:833px" width="18" height="18" viewBox="0 0 18 18"><circle cx="9" cy="9" r="9" fill="#62b152"/><path d="M5.2 9.3 L7.9 11.8 L12.8 6.6" fill="none" stroke="#fff" stroke-width="2.3" stroke-linecap="round" stroke-linejoin="round"/></svg>
<svg class="r" style="left:1035.0px;top:833px" width="18" height="18" viewBox="0 0 18 18"><circle cx="9" cy="9" r="9" fill="#62b152"/><path d="M5.2 9.3 L7.9 11.8 L12.8 6.6" fill="none" stroke="#fff" stroke-width="2.3" stroke-linecap="round" stroke-linejoin="round"/></svg>
<svg class="r" style="left:1142.5px;top:833px" width="18" height="18" viewBox="0 0 18 18"><circle cx="9" cy="9" r="9" fill="#62b152"/><path d="M5.2 9.3 L7.9 11.8 L12.8 6.6" fill="none" stroke="#fff" stroke-width="2.3" stroke-linecap="round" stroke-linejoin="round"/></svg>
<svg class="r" style="left:1250.5px;top:833px" width="18" height="18" viewBox="0 0 18 18"><circle cx="9" cy="9" r="9" fill="#62b152"/><path d="M5.2 9.3 L7.9 11.8 L12.8 6.6" fill="none" stroke="#fff" stroke-width="2.3" stroke-linecap="round" stroke-linejoin="round"/></svg>
<div class="r" style="left:700px;top:648px;width:1px;height:221px;background:#eceef2;"></div>
<div class="r" style="left:883px;top:648px;width:1px;height:221px;background:#eceef2;"></div>
<div class="r" style="left:990px;top:648px;width:1px;height:221px;background:#eceef2;"></div>
<div class="r" style="left:1098px;top:648px;width:1px;height:221px;background:#eceef2;"></div>
<div class="r" style="left:1205px;top:648px;width:1px;height:221px;background:#eceef2;"></div>
<div class="r" style="left:596px;top:894px;width:718px;height:400px;border-radius:12px;overflow:hidden;box-shadow:inset 0 0 0 1px #eceef2;"></div>
<div class="r" style="left:596px;top:894px;width:718px;height:59px;border-radius:12px 12px 0 0;background:#f3f4f6;border-bottom:1px solid #dde0e7;"></div>
<div class="t " style="left:617.6px;top:917.8px;font-size:14px;font-weight:700;color:#3e1a7a;">SERVİSLERİMİZ</div>
<div class="r" style="left:596px;top:954px;width:718px;height:50px;background:#f3f4f6;"></div>
<div class="t " style="left:617.6px;top:974.1px;font-size:11px;font-weight:700;color:#3a2b4f;">GRUP</div>
<div class="t " style="left:694.3px;top:974.1px;font-size:11px;font-weight:700;color:#3a2b4f;">METOD</div>
<div class="t " style="left:636.5px;width:600px;text-align:center;top:974.1px;font-size:11px;font-weight:700;color:#3a2b4f;">DC-01</div>
<div class="t " style="left:744.0px;width:600px;text-align:center;top:974.1px;font-size:11px;font-weight:700;color:#3a2b4f;">DC-02</div>
<div class="t " style="left:851.5px;width:600px;text-align:center;top:974.1px;font-size:11px;font-weight:700;color:#3a2b4f;">DC-03</div>
<div class="t " style="left:959.5px;width:600px;text-align:center;top:974.1px;font-size:11px;font-weight:700;color:#3a2b4f;">DC-04</div>
<div class="r" style="left:623px;top:1033.5px;width:14.5px;height:3px;border-radius:1.5px;background:#3e1a7a;"></div>
<div class="t " style="left:653.5px;top:1031.2px;font-size:12px;font-weight:700;color:#3e1a7a;">BANKA POS</div>
<div class="r" style="left:596px;top:1065px;width:718px;height:1px;background:#eceef2;"></div>
<div class="t m" style="left:694.9px;top:1087.3px;font-size:12px;font-weight:400;color:#74859a;">Akbank SanalPos Servis</div>
<svg class="r" style="left:927.5px;top:1084.5px" width="18" height="18" viewBox="0 0 18 18"><circle cx="9" cy="9" r="9" fill="#62b152"/><path d="M5.2 9.3 L7.9 11.8 L12.8 6.6" fill="none" stroke="#fff" stroke-width="2.3" stroke-linecap="round" stroke-linejoin="round"/></svg>
<svg class="r" style="left:1035.0px;top:1084.5px" width="18" height="18" viewBox="0 0 18 18"><circle cx="9" cy="9" r="9" fill="#62b152"/><path d="M5.2 9.3 L7.9 11.8 L12.8 6.6" fill="none" stroke="#fff" stroke-width="2.3" stroke-linecap="round" stroke-linejoin="round"/></svg>
<svg class="r" style="left:1142.5px;top:1084.5px" width="18" height="18" viewBox="0 0 18 18"><circle cx="9" cy="9" r="9" fill="#62b152"/><path d="M5.2 9.3 L7.9 11.8 L12.8 6.6" fill="none" stroke="#fff" stroke-width="2.3" stroke-linecap="round" stroke-linejoin="round"/></svg>
<svg class="r" style="left:1250.5px;top:1084.5px" width="18" height="18" viewBox="0 0 18 18"><circle cx="9" cy="9" r="9" fill="#62b152"/><path d="M5.2 9.3 L7.9 11.8 L12.8 6.6" fill="none" stroke="#fff" stroke-width="2.3" stroke-linecap="round" stroke-linejoin="round"/></svg>
<div class="t m" style="left:694.9px;top:1142.8px;font-size:12px;font-weight:400;color:#74859a;">Alternatifbank SanalPos Servis</div>
<svg class="r" style="left:927.5px;top:1140.0px" width="18" height="18" viewBox="0 0 18 18"><circle cx="9" cy="9" r="9" fill="#62b152"/><path d="M5.2 9.3 L7.9 11.8 L12.8 6.6" fill="none" stroke="#fff" stroke-width="2.3" stroke-linecap="round" stroke-linejoin="round"/></svg>
<svg class="r" style="left:1035.0px;top:1140.0px" width="18" height="18" viewBox="0 0 18 18"><circle cx="9" cy="9" r="9" fill="#62b152"/><path d="M5.2 9.3 L7.9 11.8 L12.8 6.6" fill="none" stroke="#fff" stroke-width="2.3" stroke-linecap="round" stroke-linejoin="round"/></svg>
<svg class="r" style="left:1142.5px;top:1140.0px" width="18" height="18" viewBox="0 0 18 18"><circle cx="9" cy="9" r="9" fill="#62b152"/><path d="M5.2 9.3 L7.9 11.8 L12.8 6.6" fill="none" stroke="#fff" stroke-width="2.3" stroke-linecap="round" stroke-linejoin="round"/></svg>
<svg class="r" style="left:1250.5px;top:1140.0px" width="18" height="18" viewBox="0 0 18 18"><circle cx="9" cy="9" r="9" fill="#62b152"/><path d="M5.2 9.3 L7.9 11.8 L12.8 6.6" fill="none" stroke="#fff" stroke-width="2.3" stroke-linecap="round" stroke-linejoin="round"/></svg>
<div class="r" style="left:596px;top:1120px;width:718px;height:1px;background:#eceef2;"></div>
<div class="r" style="left:596px;top:1176px;width:718px;height:1px;background:#eceef2;"></div>
<div class="r" style="left:674px;top:1065px;width:1px;height:130px;background:#eceef2;"></div>
<div class="r" style="left:883px;top:1065px;width:1px;height:130px;background:#eceef2;"></div>
<div class="r" style="left:990px;top:1065px;width:1px;height:130px;background:#eceef2;"></div>
<div class="r" style="left:1098px;top:1065px;width:1px;height:130px;background:#eceef2;"></div>
<div class="r" style="left:1205px;top:1065px;width:1px;height:130px;background:#eceef2;"></div>
</body></html>
